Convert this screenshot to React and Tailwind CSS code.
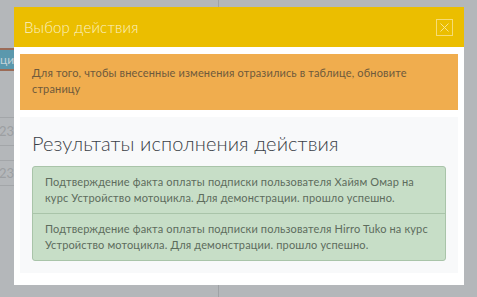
export default function App() {
  const results = [
    'Подтверждение факта оплаты подписки пользователя Хайям Омар на\nкурс Устройство мотоцикла. Для демонстрации. прошло успешно.',
    'Подтверждение факта оплаты подписки пользователя Hirro Tuko на курс Устройство мотоцикла. Для демонстрации. прошло успешно.',
  ];

  return (
    <div className="relative h-[297px] w-[477px] overflow-hidden bg-[#b4b7ba] font-['Lato',sans-serif]">
      {/* page behind the backdrop */}
      <div className="flex h-full">
        <div className="w-[219px] border-r border-[#9fa2a5] pt-[48px]">
          <div className="h-[23px] w-[14px] overflow-hidden whitespace-nowrap border-y-2 border-[#9b6b57] bg-[#5b98ad] text-[12px] leading-[19px] text-[#c4d3d8]">
            ци
          </div>
          <div className="mt-[46px] flex w-[14px] justify-end overflow-hidden whitespace-nowrap border-y border-[#a3a6a9] text-[13px] leading-[27px] text-[#9c9fa2]">
            <span>2023</span>
          </div>
          <div className="mt-[14px] flex w-[14px] justify-end overflow-hidden whitespace-nowrap border-y border-[#a3a6a9] text-[13px] leading-[24px] text-[#9c9fa2]">
            <span>2023</span>
          </div>
        </div>
      </div>

      {/* modal */}
      <div className="absolute left-[14px] top-[7px] w-[450px] bg-white">
        <div className="flex h-[40px] items-center justify-between bg-[#ebbe00] pl-[10px] pr-[11px]">
          <h2 className="text-[15px] font-light tracking-[0.2px] text-[#fbf1c4]">Выбор действия</h2>
          <button className="flex h-[17px] w-[17px] items-center justify-center border border-[#f6dc75]">
            <svg width="9" height="9" viewBox="0 0 9 9" fill="none" stroke="#f8e48e" strokeWidth="1">
              <path d="M0.5 0.5L8.5 8.5M8.5 0.5L0.5 8.5" />
            </svg>
          </button>
        </div>

        <div className="flex flex-col gap-[7px] px-[6px] pb-[12px] pt-[7px]">
          <div className="h-[56px] bg-[#f0ad4e] px-[12px] pt-[11px] text-[11px] leading-[16px] tracking-[0.15px] text-[#6e5a3c]">
            Для того, чтобы внесенные изменения отразились в таблице, обновите страницу
          </div>

          <div className="bg-[#f8f9fa] px-[12px] pb-[12px] pt-[13px]">
            <h3 className="text-[20px] font-light leading-[26px] tracking-[0.1px] text-[#3a3f47]">
              Результаты исполнения действия
            </h3>
            <div className="mt-[10px] overflow-hidden rounded-[3px] border border-[#a9c4a9] bg-[#c7dec7]">
              {results.map((text, i) => (
                <div
                  key={i}
                  className={`whitespace-pre-line px-[12px] py-[7px] text-[11px] leading-[16px] tracking-[0.15px] text-[#5d6c5d] ${i > 0 ? 'border-t border-[#a9c4a9]' : ''}`}
                >
                  {text}
                </div>
              ))}
            </div>
          </div>
        </div>
      </div>
    </div>
  );
}
